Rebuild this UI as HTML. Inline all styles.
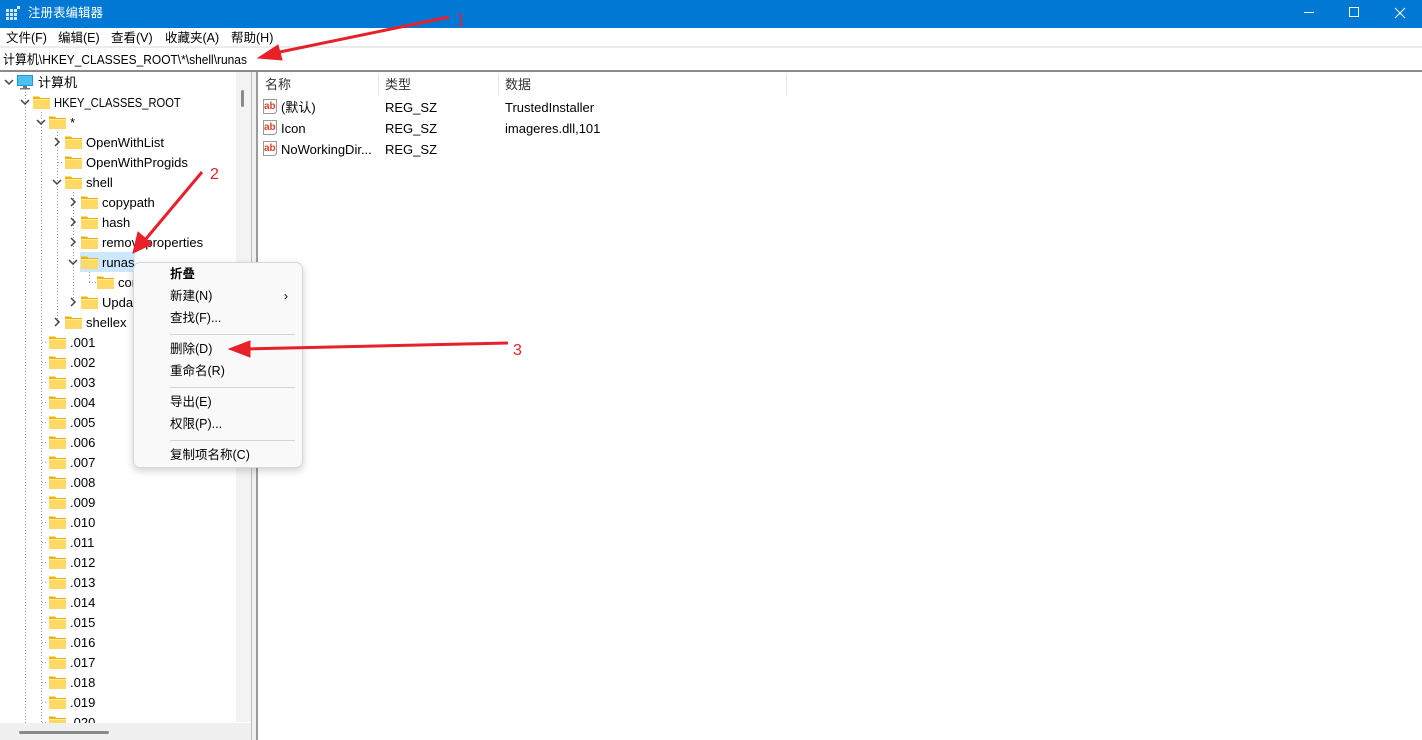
<!DOCTYPE html>
<html><head><meta charset="utf-8"><style>
*{margin:0;padding:0;box-sizing:border-box}
body{width:1422px;height:740px;overflow:hidden;background:#fff;font-family:"Liberation Sans","Noto Sans CJK SC",sans-serif;font-size:13px;color:#000;position:relative}
.abs{position:absolute}
.t{position:absolute;white-space:nowrap;line-height:20px;height:20px}
.mi{position:absolute;left:170px;font-size:12.5px;line-height:16px}
.sep{position:absolute;left:170px;width:125px;height:1px;background:#d5d5d5}
</style></head><body>
<div class="abs" style="left:0;top:0;width:1422px;height:28px;background:#0078d4"></div>
<svg class="abs" style="left:6px;top:6px" width="14" height="14"><g fill="#cfe6fb"><rect x="0" y="3" width="3" height="3"/><rect x="4" y="3" width="3" height="3"/><rect x="8" y="3" width="3" height="3"/><rect x="0" y="7" width="3" height="3"/><rect x="4" y="7" width="3" height="3"/><rect x="8" y="7" width="3" height="3"/><rect x="0" y="11" width="3" height="3"/><rect x="4" y="11" width="3" height="3"/><rect x="8" y="11" width="3" height="3"/><rect x="11" y="0" width="3" height="3"/></g></svg>
<div class="t" style="left:28px;top:3px;color:#fff;font-size:12.5px">注册表编辑器</div>
<svg class="abs" style="left:1300px;top:6px" width="120" height="16" stroke="#fff" fill="none" stroke-width="1"><line x1="4" y1="6.5" x2="14" y2="6.5"/><rect x="49.5" y="1.5" width="9" height="9"/><path d="M95 2L105 12M105 2L95 12"/></svg>
<div class="t" style="left:6px;top:28px;font-size:12.5px">文件(F)</div>
<div class="t" style="left:58px;top:28px;font-size:12.5px">编辑(E)</div>
<div class="t" style="left:111px;top:28px;font-size:12.5px">查看(V)</div>
<div class="t" style="left:165px;top:28px;font-size:12.5px">收藏夹(A)</div>
<div class="t" style="left:231px;top:28px;font-size:12.5px">帮助(H)</div>
<div class="abs" style="left:0;top:46px;width:1422px;height:2px;background:#ececec"></div>
<div class="t" style="left:3px;top:50px;font-size:13px;transform:scaleX(0.92);transform-origin:0 0">计算机\HKEY_CLASSES_ROOT\*\shell\runas</div>
<div class="abs" style="left:0;top:70px;width:1422px;height:2px;background:#8a8a8a"></div>
<div class="abs" style="left:236px;top:72px;width:15px;height:650px;background:#f3f3f3"></div>
<div class="abs" style="left:241px;top:90px;width:3px;height:17px;background:#8a8a8a;border-radius:2px"></div>
<div class="abs" style="left:0;top:723px;width:251px;height:17px;background:#f0f0f0"></div>
<div class="abs" style="left:19px;top:731px;width:90px;height:3px;background:#8a8a8a;border-radius:2px"></div>
<div class="abs" style="left:251px;top:72px;width:1px;height:668px;background:#bdbdbd"></div>
<div class="abs" style="left:252px;top:72px;width:4px;height:668px;background:#f0f0f0"></div>
<div class="abs" style="left:256px;top:72px;width:2px;height:668px;background:#9a9a9a"></div>
<svg class="abs" style="left:0;top:72px" width="236" height="651">
<g stroke="#999" stroke-dasharray="1 2" stroke-width="1">
<line x1="25.5" y1="20" x2="25.5" y2="651"/>
<line x1="41.5" y1="40" x2="41.5" y2="651"/>
<line x1="57.5" y1="60" x2="57.5" y2="250"/>
<line x1="73.5" y1="120" x2="73.5" y2="230"/>
<line x1="89.5" y1="200" x2="89.5" y2="210"/>
<line x1="89" y1="210.5" x2="96" y2="210.5"/>
<line x1="58" y1="90.5" x2="64" y2="90.5"/>
<line x1="42" y1="270.5" x2="48" y2="270.5"/><line x1="42" y1="290.5" x2="48" y2="290.5"/><line x1="42" y1="310.5" x2="48" y2="310.5"/><line x1="42" y1="330.5" x2="48" y2="330.5"/><line x1="42" y1="350.5" x2="48" y2="350.5"/><line x1="42" y1="370.5" x2="48" y2="370.5"/><line x1="42" y1="390.5" x2="48" y2="390.5"/><line x1="42" y1="410.5" x2="48" y2="410.5"/><line x1="42" y1="430.5" x2="48" y2="430.5"/><line x1="42" y1="450.5" x2="48" y2="450.5"/><line x1="42" y1="470.5" x2="48" y2="470.5"/><line x1="42" y1="490.5" x2="48" y2="490.5"/><line x1="42" y1="510.5" x2="48" y2="510.5"/><line x1="42" y1="530.5" x2="48" y2="530.5"/><line x1="42" y1="550.5" x2="48" y2="550.5"/><line x1="42" y1="570.5" x2="48" y2="570.5"/><line x1="42" y1="590.5" x2="48" y2="590.5"/><line x1="42" y1="610.5" x2="48" y2="610.5"/><line x1="42" y1="630.5" x2="48" y2="630.5"/><line x1="42" y1="650.5" x2="48" y2="650.5"/>
</g>
<g stroke="#444" fill="none" stroke-width="1.5">
<path d="M5 8L9 12L13 8"/>
<path d="M21 28L25 32L29 28"/>
<path d="M37 48L41 52L45 48"/>
<path d="M55 66L59 70L55 74"/>
<path d="M53 108L57 112L61 108"/>
<path d="M71 126L75 130L71 134"/>
<path d="M71 146L75 150L71 154"/>
<path d="M71 166L75 170L71 174"/>
<path d="M69 188L73 192L77 188"/>
<path d="M71 226L75 230L71 234"/>
<path d="M55 246L59 250L55 254"/>
</g>
<rect x="80" y="180" width="55" height="20" fill="#cce8ff"/>
<rect x="17" y="3" width="16" height="11" fill="#1e9ad6"/><rect x="18" y="4" width="14" height="9" fill="#4cc2f0"/><rect x="23" y="14" width="4" height="2" fill="#777"/><rect x="20" y="16" width="10" height="1.5" fill="#777"/>
<defs><g id="f"><path d="M0 1.5h6l1.5 1.5H17v11H0z" fill="#f0b400"/><rect x="0" y="4" width="17" height="10" fill="#ffd966"/><rect x="0" y="4" width="17" height="1" fill="#fbe9a8"/></g></defs>
<use href="#f" x="33" y="23"/><use href="#f" x="49" y="43"/><use href="#f" x="65" y="63"/><use href="#f" x="65" y="83"/><use href="#f" x="65" y="103"/>
<use href="#f" x="81" y="123"/><use href="#f" x="81" y="143"/><use href="#f" x="81" y="163"/><use href="#f" x="81" y="183"/><use href="#f" x="97" y="203"/><use href="#f" x="81" y="223"/><use href="#f" x="65" y="243"/>
<use href="#f" x="49" y="263"/><use href="#f" x="49" y="283"/><use href="#f" x="49" y="303"/><use href="#f" x="49" y="323"/><use href="#f" x="49" y="343"/><use href="#f" x="49" y="363"/><use href="#f" x="49" y="383"/><use href="#f" x="49" y="403"/><use href="#f" x="49" y="423"/><use href="#f" x="49" y="443"/><use href="#f" x="49" y="463"/><use href="#f" x="49" y="483"/><use href="#f" x="49" y="503"/><use href="#f" x="49" y="523"/><use href="#f" x="49" y="543"/><use href="#f" x="49" y="563"/><use href="#f" x="49" y="583"/><use href="#f" x="49" y="603"/><use href="#f" x="49" y="623"/><use href="#f" x="49" y="643"/>
</svg>
<div class="abs" style="left:0;top:73px;width:236px;height:650px;overflow:hidden">
<div class="t" style="left:38px;top:0">计算机</div>
<div class="t" style="left:54px;top:20px;transform:scaleX(0.86);transform-origin:0 0">HKEY_CLASSES_ROOT</div>
<div class="t" style="left:70px;top:40px">*</div>
<div class="t" style="left:86px;top:60px">OpenWithList</div>
<div class="t" style="left:86px;top:80px">OpenWithProgids</div>
<div class="t" style="left:86px;top:100px">shell</div>
<div class="t" style="left:102px;top:120px">copypath</div>
<div class="t" style="left:102px;top:140px">hash</div>
<div class="t" style="left:102px;top:160px">removeproperties</div>
<div class="t" style="left:102px;top:180px">runas</div>
<div class="t" style="left:118px;top:200px">command</div>
<div class="t" style="left:102px;top:220px">UpdateEncryption</div>
<div class="t" style="left:86px;top:240px">shellex</div>
<div class="t" style="left:70px;top:260px">.001</div><div class="t" style="left:70px;top:280px">.002</div><div class="t" style="left:70px;top:300px">.003</div><div class="t" style="left:70px;top:320px">.004</div><div class="t" style="left:70px;top:340px">.005</div><div class="t" style="left:70px;top:360px">.006</div><div class="t" style="left:70px;top:380px">.007</div><div class="t" style="left:70px;top:400px">.008</div><div class="t" style="left:70px;top:420px">.009</div><div class="t" style="left:70px;top:440px">.010</div><div class="t" style="left:70px;top:460px">.011</div><div class="t" style="left:70px;top:480px">.012</div><div class="t" style="left:70px;top:500px">.013</div><div class="t" style="left:70px;top:520px">.014</div><div class="t" style="left:70px;top:540px">.015</div><div class="t" style="left:70px;top:560px">.016</div><div class="t" style="left:70px;top:580px">.017</div><div class="t" style="left:70px;top:600px">.018</div><div class="t" style="left:70px;top:620px">.019</div><div class="t" style="left:70px;top:640px">.020</div>
</div>
<div class="abs" style="left:378px;top:74px;width:1px;height:22px;background:#e5e5e5"></div>
<div class="abs" style="left:498px;top:74px;width:1px;height:22px;background:#e5e5e5"></div>
<div class="abs" style="left:786px;top:74px;width:1px;height:22px;background:#e5e5e5"></div>
<div class="t" style="left:265px;top:75px;color:#333">名称</div>
<div class="t" style="left:385px;top:75px;color:#333">类型</div>
<div class="t" style="left:505px;top:75px;color:#333">数据</div>
<svg class="abs" style="left:263px;top:98px" width="16" height="60"><defs><g id="ab"><path d="M0.5 0.5h13v12l-2 2h-11z" fill="#fff" stroke="#999"/><text x="1" y="10" font-family="Liberation Sans" font-weight="bold" font-size="10" fill="#d9452b">ab</text></g></defs><use href="#ab" y="1"/><use href="#ab" y="22"/><use href="#ab" y="43"/></svg>
<div class="t" style="left:281px;top:98px">(默认)</div>
<div class="t" style="left:281px;top:119px">Icon</div>
<div class="t" style="left:281px;top:140px">NoWorkingDir...</div>
<div class="t" style="left:385px;top:98px">REG_SZ</div>
<div class="t" style="left:385px;top:119px">REG_SZ</div>
<div class="t" style="left:385px;top:140px">REG_SZ</div>
<div class="t" style="left:505px;top:98px">TrustedInstaller</div>
<div class="t" style="left:505px;top:119px">imageres.dll,101</div>
<div class="abs" style="left:133px;top:262px;width:170px;height:206px;background:#f9f9f9;border:1px solid #d8d8d8;border-radius:7px;box-shadow:0 3px 8px rgba(0,0,0,.18)"></div>
<div class="mi" style="top:266px;font-weight:bold">折叠</div>
<div class="mi" style="top:288px">新建(N)</div>
<div class="abs" style="left:284px;top:288px;font-size:12px;line-height:16px">›</div>
<div class="mi" style="top:310px">查找(F)...</div>
<div class="sep" style="top:334px"></div>
<div class="mi" style="top:341px">删除(D)</div>
<div class="mi" style="top:363px">重命名(R)</div>
<div class="sep" style="top:387px"></div>
<div class="mi" style="top:394px">导出(E)</div>
<div class="mi" style="top:416px">权限(P)...</div>
<div class="sep" style="top:440px"></div>
<div class="mi" style="top:447px">复制项名称(C)</div>
<svg class="abs" style="left:0;top:0" width="1422" height="740">
<g fill="#e8202a" stroke="#e8202a">
<line x1="449" y1="17" x2="275" y2="53" stroke-width="3"/>
<path d="M258 58L278 45L282 60z"/>
<line x1="202" y1="172" x2="145" y2="240" stroke-width="3"/>
<path d="M133 253L138 232L152 244z"/>
<line x1="508" y1="343" x2="245" y2="349" stroke-width="3"/>
<path d="M229 349L250 341L250 357z"/>
</g>
<g fill="#e8202a" font-family="Liberation Sans" font-size="16">
<text x="456" y="25">1</text><text x="210" y="179">2</text><text x="513" y="355">3</text>
</g>
</svg>
</body></html>
